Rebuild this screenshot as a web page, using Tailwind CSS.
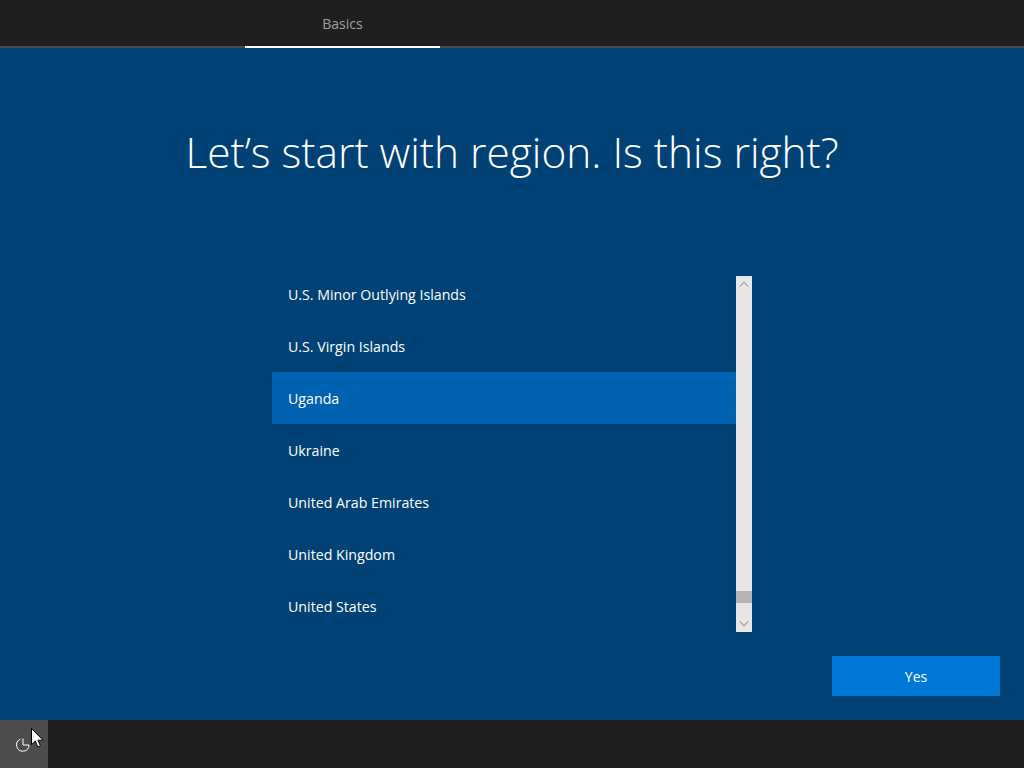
<!DOCTYPE html>
<html lang="en">
<head>
    <meta charset="UTF-8">
    <title>Basics</title>
    <script src="https://cdn.jsdelivr.net/npm/@tailwindcss/browser@4"></script>
</head>
<body class="bg-[#004275] font-['Open_Sans',sans-serif] overflow-hidden">
    <div class="relative w-[1024px] h-[768px] flex flex-col">
        <!-- Top bar -->
        <div class="h-12 bg-[#1f1f1f] border-b-2 border-[#4a4a4a] pl-[245px] shrink-0">
            <div class="w-[195px] h-12 border-b-2 border-white flex items-center justify-center text-sm text-[#a0a0a0] pt-[1px]">Basics</div>
        </div>

        <!-- Main -->
        <div class="flex-1 flex flex-col">
            <h1 class="text-[42.4px] leading-[60px] font-light text-white text-center mt-[74px]">Let’s start with region. Is this right?</h1>

            <div class="flex ml-[272px] mt-[94px] h-[356px]">
                <div class="w-[464px] h-full overflow-hidden text-white text-[14.2px]">
                    <div class="-mt-2">
                        <div class="h-[52px] px-4 pt-[2px] flex items-center">U.S. Minor Outlying Islands</div>
                        <div class="h-[52px] px-4 pt-[2px] flex items-center">U.S. Virgin Islands</div>
                        <div class="h-[52px] px-4 pt-[2px] flex items-center bg-[#0063b1]">Uganda</div>
                        <div class="h-[52px] px-4 pt-[2px] flex items-center">Ukraine</div>
                        <div class="h-[52px] px-4 pt-[2px] flex items-center">United Arab Emirates</div>
                        <div class="h-[52px] px-4 pt-[2px] flex items-center">United Kingdom</div>
                        <div class="h-[52px] px-4 pt-[2px] flex items-center">United States</div>
                    </div>
                </div>
                <!-- Scrollbar -->
                <div class="w-4 h-full bg-[#e6e6e6] flex flex-col">
                    <div class="h-4 flex items-center justify-center">
                        <svg class="w-[10px] h-[6px]" viewBox="0 0 10 6" fill="none" stroke="#7a7a7a" stroke-width="1"><path d="M1 5.5 5 1.2 9 5.5"/></svg>
                    </div>
                    <div class="flex-1 flex flex-col justify-end">
                        <div class="h-3 bg-[#b4b4b4] mb-[13px]"></div>
                    </div>
                    <div class="h-4 flex items-center justify-center">
                        <svg class="w-[10px] h-[6px]" viewBox="0 0 10 6" fill="none" stroke="#7a7a7a" stroke-width="1"><path d="M1 .5 5 4.8 9 .5"/></svg>
                    </div>
                </div>
            </div>

            <div class="flex justify-end pr-6 mt-6">
                <button class="w-[168px] h-10 bg-[#0078d7] text-white text-sm pt-[1px]">Yes</button>
            </div>
        </div>

        <!-- Bottom bar -->
        <div class="h-12 bg-[#1f1f1f] shrink-0">
            <div class="w-12 h-12 bg-[#4c4c4c] flex items-center justify-center">
                <svg class="w-4 h-4 mt-[2px] -ml-[2px]" viewBox="0 0 16 16" fill="none" stroke="#ffffff" stroke-width="1">
                    <path d="M5.5 2.2A6.2 6.2 0 1 0 14 8.2"/>
                    <path d="M8 1.5V8H14"/>
                </svg>
            </div>
        </div>

        <!-- Mouse pointer -->
        <svg class="absolute left-[31px] top-[728px] w-[13px] h-5" viewBox="0 0 13 20">
            <path d="M.5.5V16.5L4.3 13 6.8 19 9.4 17.9 6.9 12.2H12L.5.5Z" fill="#ffffff" stroke="#000000" stroke-width="1"/>
        </svg>
    </div>
</body>
</html>
